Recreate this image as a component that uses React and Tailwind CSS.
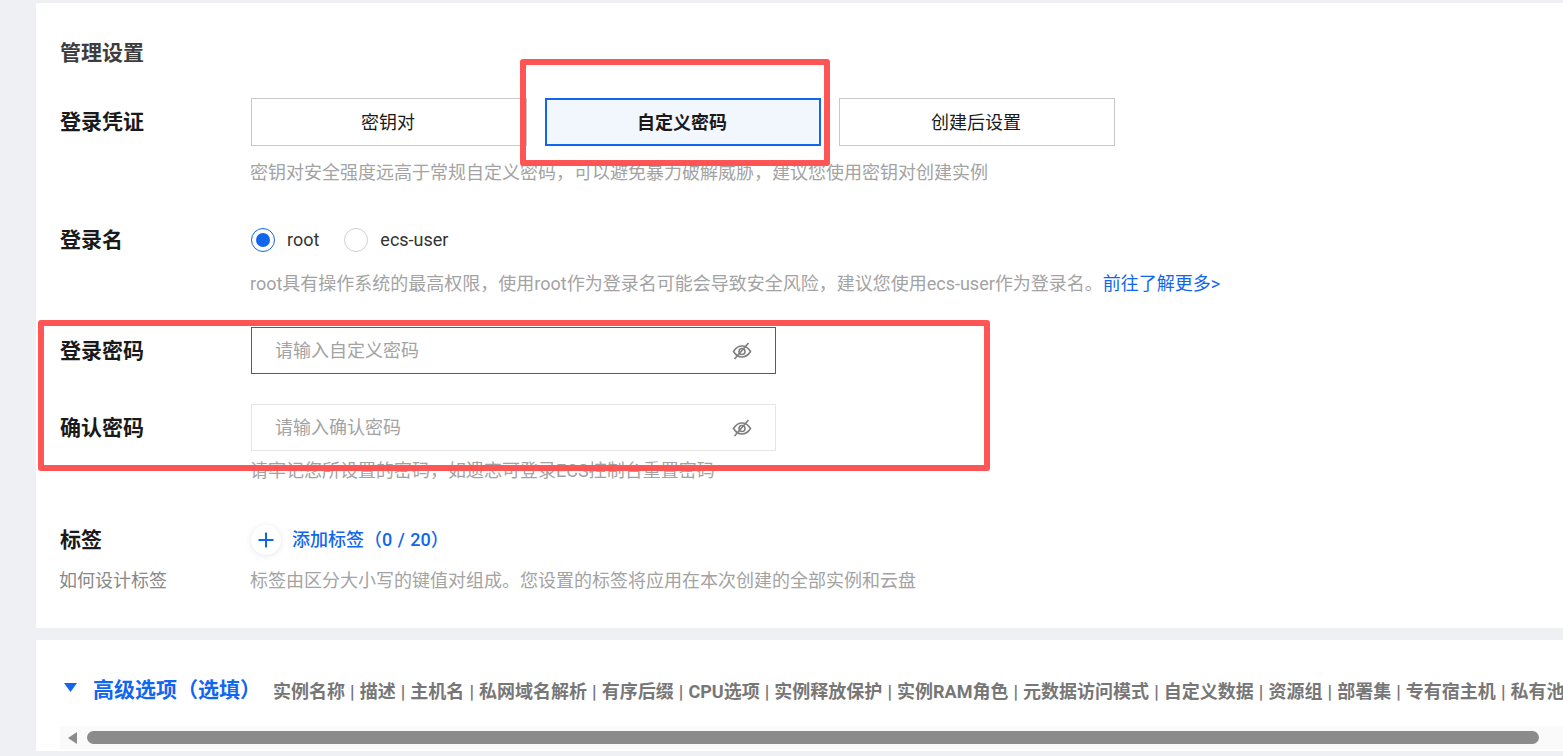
import React from 'react';

const EyeOff = () => (
    <svg width="20" height="20" viewBox="0 0 20 20" fill="none" stroke="#808080" strokeWidth="1.6">
        <path d="M1.5 10.5 C4 6.5 7 5 10 5 C13 5 16 6.5 18.5 10.5 C16 14.5 13 16 10 16 C7 16 4 14.5 1.5 10.5 Z" />
        <circle cx="10" cy="10.5" r="3" />
        <path d="M2.5 18 L16.5 2" />
    </svg>
);

const Label = ({ children }) => (
    <div className="w-[191px] shrink-0 text-[21px] leading-[30px] font-bold text-[#1a1a1a]">{children}</div>
);

const Hint = ({ children, className = '' }) => (
    <div className={`ml-[190px] text-[18px] leading-[26px] text-[#a3a3a3] whitespace-nowrap ${className}`}>{children}</div>
);

const OptionButton = ({ children, active }) => (
    <div
        className={
            active
                ? 'w-[276px] h-[48px] flex items-center justify-center pr-0.5 border-2 border-[#1166ee] bg-[#f2f6fd] text-[18px] font-bold text-[#1a1a1a]'
                : 'w-[276px] h-[48px] flex items-center justify-center pr-0.5 border border-[#c8c8c8] bg-white text-[18px] text-[#1a1a1a]'
        }
    >
        {children}
    </div>
);

const PasswordInput = ({ placeholder, error }) => (
    <div
        className={`w-[525px] h-[47px] flex items-center justify-between pl-[23px] pr-[23px] border ${
            error ? 'border-[#c4331c]' : 'border-[#e6e6e6]'
        }`}
    >
        <span className="pb-px text-[18px] text-[#a3a3a3]">{placeholder}</span>
        <EyeOff />
    </div>
);

const advanced =
    '实例名称 | 描述 | 主机名 | 私网域名解析 | 有序后缀 | CPU选项 | 实例释放保护 | 实例RAM角色 | 元数据访问模式 | 自定义数据 | 资源组 | 部署集 | 专有宿主机 | 私有池';

export default function App() {
    return (
        <div className="relative w-[1563px] h-[756px] overflow-hidden bg-[#eff0f4] pt-[3px] pl-[36px] font-['Roboto','Noto_Sans_CJK_SC',sans-serif]">
            {/* Settings card */}
            <div className="h-[625px] bg-white pl-6 pt-[35px]">
                <div className="text-[21px] leading-[30px] font-bold text-[#3d3d3d]">管理设置</div>

                <div className="flex items-center mt-[30px]">
                    <Label>登录凭证</Label>
                    <div className="flex gap-[18px]">
                        <OptionButton>密钥对</OptionButton>
                        <OptionButton active>自定义密码</OptionButton>
                        <OptionButton>创建后设置</OptionButton>
                    </div>
                </div>
                <Hint className="mt-[14px]">密钥对安全强度远高于常规自定义密码，可以避免暴力破解威胁，建议您使用密钥对创建实例</Hint>

                <div className="flex items-center mt-[39px] h-[30px]">
                    <Label>登录名</Label>
                    <div className="flex items-center">
                        <span className="w-6 h-6 rounded-full border border-[#1166ee] flex items-center justify-center">
                            <span className="w-3.5 h-3.5 rounded-full bg-[#1166ee]" />
                        </span>
                        <span className="ml-3 pb-px text-[18px] text-[#333333]">root</span>
                        <span className="ml-[25px] w-6 h-6 rounded-full border border-[#cfcfcf]" />
                        <span className="ml-3 pb-px text-[18px] text-[#333333]">ecs-user</span>
                    </div>
                </div>
                <Hint className="mt-[16px]">
                    root具有操作系统的最高权限，使用root作为登录名可能会导致安全风险，建议您使用ecs-user作为登录名。
                    <span className="text-[#1166ee]">前往了解更多&gt;</span>
                </Hint>

                <div className="flex items-center mt-[30px]">
                    <Label>登录密码</Label>
                    <PasswordInput placeholder="请输入自定义密码" error />
                </div>
                <div className="flex items-center mt-[30px]">
                    <Label>确认密码</Label>
                    <PasswordInput placeholder="请输入确认密码" />
                </div>
                <Hint className="mt-[7px]">请牢记您所设置的密码，如遗忘可登录ECS控制台重置密码</Hint>

                <div className="flex items-center mt-[41px] h-[30px]">
                    <Label>标签</Label>
                    <span className="w-[30px] h-[30px] rounded-full bg-white shadow-[0_1px_6px_rgba(0,0,0,0.1)] flex items-center justify-center">
                        <svg width="16" height="16" viewBox="0 0 16 16" stroke="#1166ee" strokeWidth="2">
                            <path d="M8 0.5 V15.5 M0.5 8 H15.5" />
                        </svg>
                    </span>
                    <span className="ml-[11px] pb-0.5 text-[18px] font-medium text-[#1166ee] [word-spacing:1px]">添加标签（0 / 20）</span>
                </div>
                <div className="flex items-center mt-[13px]">
                    <div className="w-[190px] -ml-px shrink-0 text-[18px] leading-[26px] text-[#888888]">如何设计标签</div>
                    <div className="ml-px text-[18px] leading-[26px] text-[#a3a3a3]">标签由区分大小写的键值对组成。您设置的标签将应用在本次创建的全部实例和云盘</div>
                </div>
            </div>

            {/* Advanced options card */}
            <div className="mt-[12px] h-[111px] bg-white overflow-hidden">
                <div className="flex items-center pt-[16px] pl-[28px] h-[86px] whitespace-nowrap">
                    <svg width="13" height="9" viewBox="0 0 13 9" className="shrink-0 mb-2" fill="#1166ee">
                        <path d="M0 0 H13 L6.5 9 Z" />
                    </svg>
                    <span className="ml-[16px] text-[21px] font-bold text-[#1166ee]">高级选项（选填）</span>
                    <span className="ml-[12px] text-[18px] font-bold text-[#777777] [word-spacing:0.6px]">{advanced}</span>
                </div>
                <div className="ml-6 h-[23px] bg-[#fafafa] flex items-center">
                    <svg width="10" height="12" viewBox="0 0 10 12" className="ml-2 shrink-0" fill="#8b8b8b">
                        <path d="M9 0 V12 L0 6 Z" />
                    </svg>
                    <div className="ml-[9px] w-[1452px] h-[13px] rounded-full bg-[#8b8b8b]" />
                </div>
            </div>

            {/* Red annotation boxes */}
            <div className="absolute left-[520px] top-[59px] w-[310px] h-[107px] border-[6px] border-[#ff5555] rounded-[3px]" />
            <div className="absolute left-[38px] top-[320px] w-[952px] h-[151px] border-[6px] border-[#ff5555] rounded-[3px]" />
        </div>
    );
}
